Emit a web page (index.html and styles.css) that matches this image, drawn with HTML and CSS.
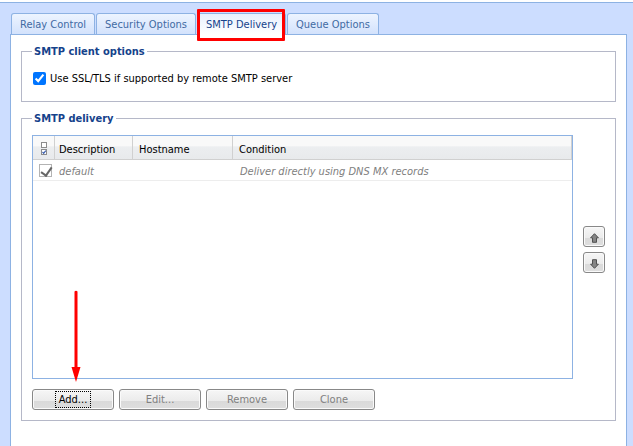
FILE: index.html
```html
<!DOCTYPE html>
<html lang="en">
<head>
<meta charset="utf-8">
<title>SMTP Delivery</title>
<link rel="stylesheet" href="styles.css">
</head>
<body>
<main class="window">
  <nav class="tabs">
    <a class="tab" href="#relay">Relay Control</a>
    <a class="tab" href="#security">Security Options</a>
    <a class="tab active" href="#delivery" aria-current="page">SMTP Delivery</a>
    <a class="tab" href="#queue">Queue Options</a>
  </nav>
  <section class="panel">
    <fieldset class="group">
      <legend>SMTP client options</legend>
      <div class="option">
        <input class="check" type="checkbox" id="ssl" checked>
        <label for="ssl">Use SSL/TLS if supported by remote SMTP server</label>
      </div>
    </fieldset>
    <fieldset class="group delivery">
      <legend>SMTP delivery</legend>
      <div class="list">
        <div class="grid">
          <table>
            <colgroup><col class="col-check"><col class="col-desc"><col class="col-host"><col></colgroup>
            <thead>
              <tr>
                <th class="cell-check" aria-label="Enabled">
                  <svg class="head-icon" width="8" height="15" viewBox="0 0 8 15" fill="none">
                    <rect x="1.5" y="1.5" width="5" height="5" fill="#fff" stroke="#8c8c8c"/>
                    <rect x="1.5" y="8.5" width="5" height="5" fill="#fff" stroke="#8c8c8c"/>
                    <path d="M2.5 11 3.7 12.3 5.8 9.6" stroke="#3b5fae" stroke-width="1.2"/>
                  </svg>
                </th>
                <th>Description</th><th>Hostname</th><th>Condition</th>
              </tr>
            </thead>
            <tbody>
              <tr>
                <td class="cell-check"><input class="row-check" type="checkbox" aria-label="default enabled" checked></td>
                <td>default</td><td></td><td class="condition">Deliver directly using DNS MX records</td>
              </tr>
            </tbody>
          </table>
        </div>
        <div class="order">
          <button class="button icon" aria-label="Move up">
            <svg width="9" height="10" viewBox="0 0 9 10"><path d="M4.5.7 8.4 4.8H6.5V9.3H2.5V4.8H.6Z" fill="#858585" stroke="#505050"/></svg>
          </button>
          <button class="button icon" aria-label="Move down">
            <svg width="9" height="10" viewBox="0 0 9 10"><path d="M4.5 9.3 8.4 5.2H6.5V.7H2.5V5.2H.6Z" fill="#858585" stroke="#505050"/></svg>
          </button>
        </div>
      </div>
      <div class="actions">
        <button class="button focused"><span>Add...</span>
          <svg class="pointer" width="10" height="92" viewBox="0 0 10 92" aria-hidden="true"><path d="M3.5 1.5Q5 0 6.5 1.5V77H9.5L5 92 .5 77H3.5Z" fill="red"/></svg>
        </button>
        <button class="button" disabled>Edit...</button>
        <button class="button" disabled>Remove</button>
        <button class="button" disabled>Clone</button>
      </div>
    </fieldset>
  </section>
</main>
</body>
</html>
```
FILE: styles.css
```css
* { box-sizing: border-box; }
body {
  margin: 0;
  padding-top: 2px;
  min-height: 100vh;
  display: flex;
  background: #fff;
  color: #000;
  font: 11px/15px "DejaVu Sans Condensed", "DejaVu Sans", sans-serif;
}
.window {
  flex: 1;
  display: flex;
  flex-direction: column;
  padding: 10px 6px 0 10px;
  border-top: 1px solid #8db2e3;
  background: #ccddff;
}
.tabs { display: flex; gap: 1px; padding-left: 1px; }
.tab {
  height: 21px;
  padding: 3px 8px;
  border: 1px solid #8db2e3;
  border-bottom: 0;
  border-radius: 3px 3px 0 0;
  background: linear-gradient(#edf4ff, #d3e2fc);
  color: #416aa3;
  text-decoration: none;
  white-space: nowrap;
}
.tab.active {
  position: relative;
  height: 22px;
  margin-bottom: -1px;
  background: linear-gradient(#e8f0fd, #fff);
  color: #15428b;
}
.tab.active::after {
  content: "";
  position: absolute;
  inset: -5px 0 -6px -1px;
  border: 3px solid #f00;
  border-radius: 1px;
}
.panel {
  flex: 1;
  padding: 9px 10px 25px;
  border: 1px solid #8db2e3;
  border-bottom: 0;
  background: #fff;
}
.group {
  min-width: 0;
  margin: 0 0 9px;
  padding: 8px 10px 12px;
  border: 1px solid #b5b8c8;
}
legend { padding: 0 2px; color: #15428b; font-weight: bold; }
.option { display: flex; align-items: center; gap: 3px; height: 22px; }
.check { width: 13px; height: 13px; margin: 0 1px; accent-color: #0075ff; }
.delivery { margin: 0; padding: 9px 10px 10px; }
.list { display: flex; gap: 10px; }
.grid { flex: 1; min-height: 244px; border: 1px solid #8db2e3; }
table { width: 100%; table-layout: fixed; border-collapse: separate; border-spacing: 0; }
.col-check { width: 22px; }
.col-desc { width: 78px; }
.col-host { width: 100px; }
th {
  height: 24px;
  padding: 4px 4px 0;
  border-right: 1px solid #d0d0d0;
  border-bottom: 1px solid #d0d0d0;
  background: linear-gradient(#f9f9f9 45%, #eceef0 46%, #e8eaec);
  font-weight: normal;
  text-align: left;
}
th + th + th { padding-left: 6px; }
td {
  height: 21px;
  padding: 2px 4px 0;
  border-bottom: 1px solid #ededed;
  color: #808080;
  font-style: italic;
}
td.condition { padding-left: 7px; }
.cell-check { padding: 0; }
.head-icon { display: block; margin: 2px auto 0 7px; }
.row-check {
  appearance: none;
  display: block;
  width: 13px;
  height: 13px;
  margin: 0 0 0 6px;
  border: 1px solid #b3b3b3;
  background: #fff;
}
.row-check::before {
  content: "";
  display: block;
  width: 5px;
  height: 9px;
  margin: 0 0 0 3px;
  border: solid #666;
  border-width: 0 2px 2px 0;
  transform: rotate(35deg);
}
.order { display: flex; flex-direction: column; justify-content: center; gap: 5px; margin-top: -16px; }
.actions { display: flex; gap: 5px; margin-top: 10px; }
.button {
  position: relative;
  width: 82px;
  height: 21px;
  padding: 0;
  border: 1px solid #888;
  border-radius: 3px;
  background: linear-gradient(#f6f6f6, #ebebeb 57%, #dadada 58%, #dedede);
  box-shadow: inset 0 0 0 1px #fafafa;
  color: #000;
  font: inherit;
}
.button:disabled { color: #808080; }
.icon { display: flex; align-items: center; justify-content: center; width: 22px; padding-top: 3px; }
.focused span { display: inline-block; padding: 0 3px; outline: 1px dotted #000; }
.pointer { position: absolute; right: 32px; bottom: 27px; }
```
